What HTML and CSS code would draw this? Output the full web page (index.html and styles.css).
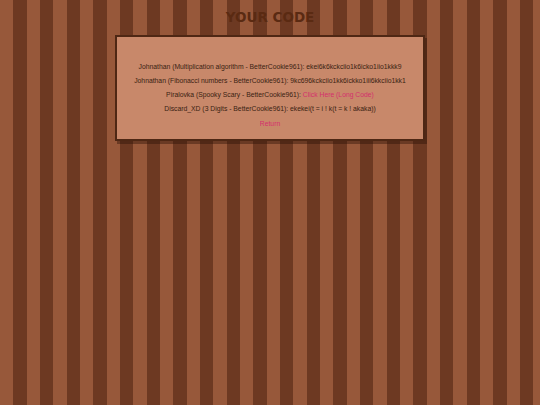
FILE: index.html
```html
<!DOCTYPE html>
<html>
<head>
<meta charset="utf-8">
<link rel="stylesheet" href="styles.css">
</head>
<body>
<h1 class="title">YOUR CODE</h1>
<div class="box">
  <p class="line">Johnathan (Multiplication algorithm - BetterCookie961): ekei6k6kckciio1k6icko1iio1kkk9</p>
  <p class="line">Johnathan (Fibonacci numbers - BetterCookie961): 9kc696kckciio1kk6ickko1iii6kkciio1kk1</p>
  <p class="line">Piralovka (Spooky Scary - BetterCookie961): <a class="link" href="#">Click Here (Long Code)</a></p>
  <p class="line">Discard_XD (3 Digits - BetterCookie961): ekekei(t = i ! k(t = k ! akaka))</p>
  <p class="line last"><a class="link" href="#">Return</a></p>
</div>
</body>
</html>
```
FILE: styles.css
```css
html, body {
  margin: 0;
  padding: 0;
  height: 100%;
}
body {
  background: repeating-linear-gradient(90deg, #97583a 0px, #97583a 13.33px, #6d3922 13.33px, #6d3922 26.67px);
  font-family: "Liberation Sans", Arial, sans-serif;
}
.title {
  margin: 0;
  padding-top: 9px;
  height: 26px;
  text-align: center;
  font-family: "DejaVu Sans", Verdana, sans-serif;
  font-weight: bold;
  font-size: 13.5px;
  line-height: 16px;
  color: #5a2a12;
}
.box {
  width: 306px;
  margin: 0 auto;
  background: #c8886a;
  border: 2px solid #4e2714;
  box-shadow: 2px 3px 0 rgba(40, 15, 5, 0.4);
  padding: 23px 0 8px;
  text-align: center;
}
.line {
  margin: 0;
  font-size: 6.8px;
  line-height: 14px;
  color: #3a2212;
}
.line.last {
  margin-top: 1px;
}
.link {
  color: #d4306c;
  text-decoration: none;
}
```
